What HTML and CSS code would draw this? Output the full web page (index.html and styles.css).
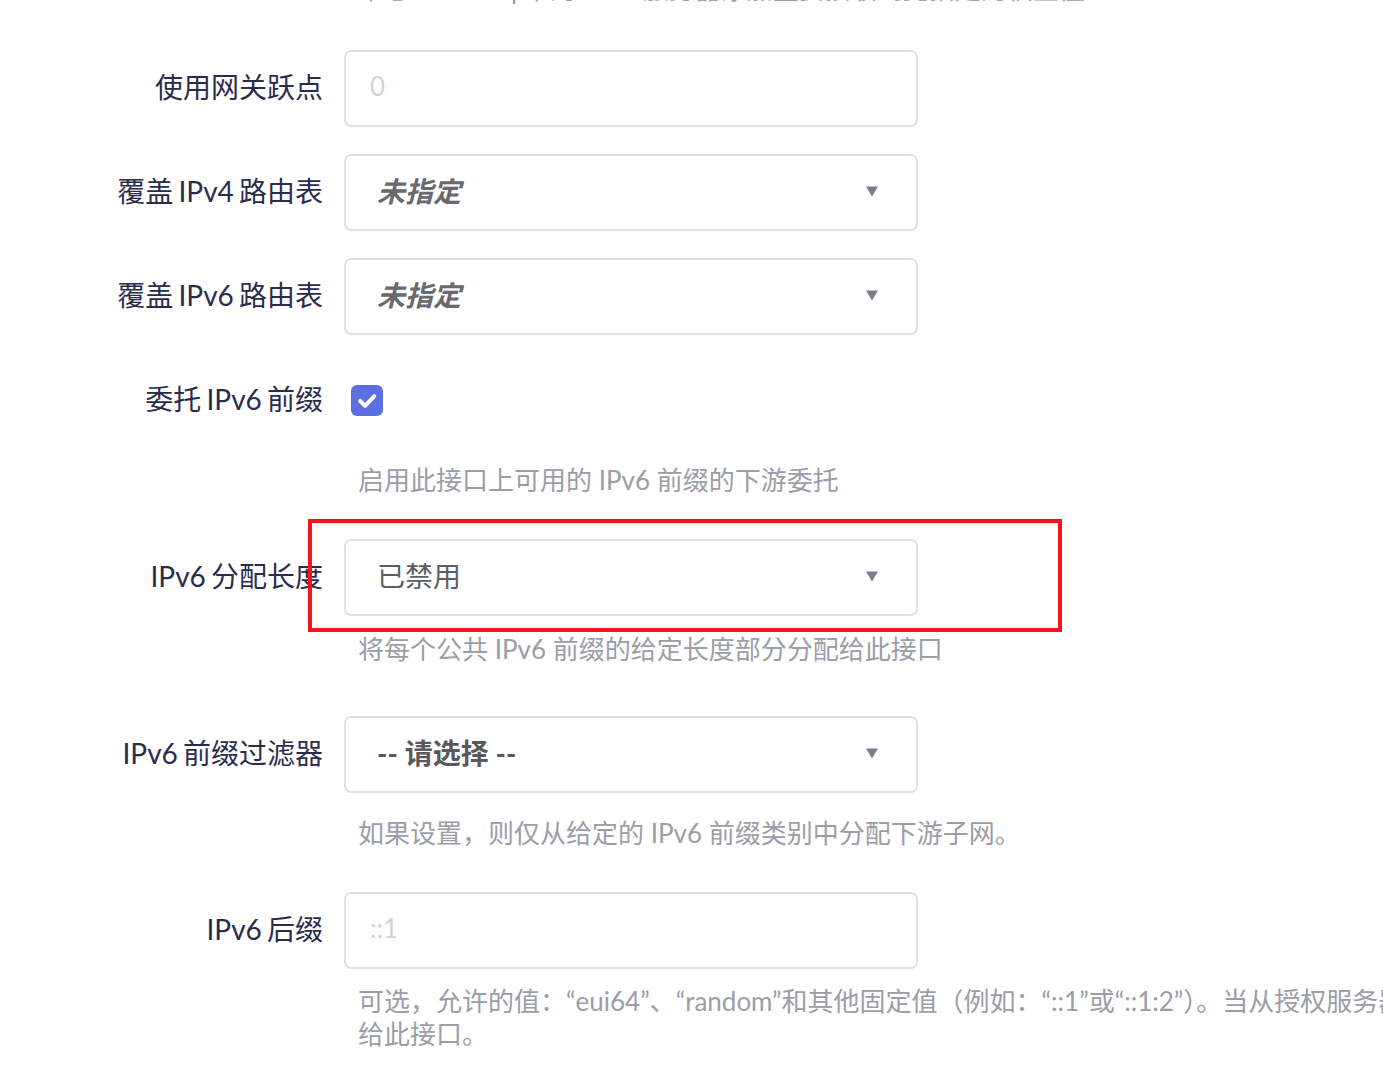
FILE: index.html
```html
<!DOCTYPE html>
<html lang="zh-CN">
<head>
<meta charset="utf-8">
<title>接口设置</title>
<link rel="stylesheet" href="styles.css">
</head>
<body>
<div class="page">
  <p class="desc desc-top">中心 dnsmasq 中的 DNS 服务器添加主要接收到此指定的权重值</p>

  <div class="row row-first">
    <label class="label">使用网关跃点</label>
    <div class="input"><span class="placeholder">0</span></div>
  </div>

  <div class="row">
    <label class="label">覆盖 IPv4 路由表</label>
    <div class="select"><span class="select-text unset">未指定</span><svg class="arrow" viewBox="0 0 12 10"><path d="M0 0H12L6 10Z"/></svg></div>
  </div>

  <div class="row">
    <label class="label">覆盖 IPv6 路由表</label>
    <div class="select"><span class="select-text unset">未指定</span><svg class="arrow" viewBox="0 0 12 10"><path d="M0 0H12L6 10Z"/></svg></div>
  </div>

  <div class="row">
    <label class="label">委托 IPv6 前缀</label>
    <div class="check-wrap">
      <span class="checkbox"><svg viewBox="0 0 32 32"><path d="M9 16.5l5 5 9.5-10" fill="none" stroke="#fff" stroke-width="4.2" stroke-linecap="round" stroke-linejoin="round"/></svg></span>
    </div>
    <p class="desc desc-check">启用此接口上可用的 IPv6 前缀的下游委托</p>
  </div>

  <div class="row row-gap-a">
    <label class="label">IPv6 分配长度</label>
    <div class="select"><span class="select-text">已禁用</span><svg class="arrow" viewBox="0 0 12 10"><path d="M0 0H12L6 10Z"/></svg></div>
    <p class="desc desc-sel">将每个公共 IPv6 前缀的给定长度部分分配给此接口</p>
  </div>

  <div class="row row-gap-b">
    <label class="label">IPv6 前缀过滤器</label>
    <div class="select"><span class="select-text strong">-- 请选择 --</span><svg class="arrow" viewBox="0 0 12 10"><path d="M0 0H12L6 10Z"/></svg></div>
    <p class="desc desc-filter">如果设置，则仅从给定的 IPv6 前缀类别中分配下游子网。</p>
  </div>

  <div class="row row-gap-a">
    <label class="label">IPv6 后缀</label>
    <div class="input"><span class="placeholder">::1</span></div>
    <p class="desc desc-wide">可选，允许的值：“eui64”、“random”和其他固定值（例如：“::1”或“::1:2”）。当从授权服务器获取 IPv6 前缀时，使用后缀（如“::1”）形成 IPv6 地址（“2001:db8::1”）并分配<br>给此接口。</p>
  </div>

  <div class="highlight"></div>
</div>
</body>
</html>
```

FILE: styles.css
```css
html, body {
  margin: 0;
  padding: 0;
  background: #ffffff;
  overflow: hidden;
}

body {
  font-family: Lato, "Noto Sans CJK SC", sans-serif;
}

.page {
  position: relative;
  width: 1383px;
  height: 1079px;
  overflow: hidden;
}

.desc {
  margin: 0;
  font-size: 26px;
  line-height: 33px;
  color: #9b9da7;
  white-space: nowrap;
}

.desc-top {
  margin-top: -27px;
  padding-left: 358px;
}

.row {
  display: grid;
  grid-template-columns: 323px 574px;
  column-gap: 21px;
  margin-top: 27px;
}

.row-first {
  margin-top: 44px;
}

.row-gap-a {
  margin-top: 42px;
}

.row-gap-b {
  margin-top: 50px;
}

.label {
  grid-column: 1;
  grid-row: 1;
  align-self: center;
  text-align: right;
  font-size: 28px;
  line-height: 36px;
  padding-bottom: 4px;
  color: #2b2c4d;
  white-space: nowrap;
  word-spacing: -2px;
}

.input,
.select,
.check-wrap {
  grid-column: 2;
  grid-row: 1;
  height: 77px;
  box-sizing: border-box;
}

.input,
.select {
  border: 2px solid #e1e1e4;
  border-radius: 7px;
  background: #fff;
  display: flex;
  align-items: center;
}

.input {
  padding-left: 24px;
}

.placeholder {
  font-size: 26px;
  color: #d2d2d6;
  padding-bottom: 6px;
}

.select {
  padding: 0 38px 0 31px;
  justify-content: space-between;
}

.select-text {
  font-size: 28px;
  color: #5e5e62;
  padding-bottom: 6px;
}

.select-text.unset {
  font-style: italic;
  font-weight: 700;
  color: #6a6a6e;
}

.select-text.strong {
  font-weight: 700;
  color: #59595d;
}

.arrow {
  width: 12px;
  height: 11px;
  fill: #777f8d;
  padding-bottom: 2px;
}

.check-wrap {
  display: flex;
  align-items: center;
  padding-left: 7px;
}

.checkbox {
  width: 32px;
  height: 31px;
  border-radius: 6px;
  background: #5b6fe1;
  display: flex;
}

.checkbox svg {
  width: 32px;
  height: 31px;
}

.row .desc {
  grid-column: 2;
  grid-row: 2;
  padding-left: 14px;
}

.desc-check {
  margin-top: 25px;
}

.desc-sel {
  margin-top: 17px;
}

.desc-filter {
  margin-top: 24px;
}

.desc-wide {
  margin-top: 16px;
}

.highlight {
  position: absolute;
  left: 308px;
  top: 519px;
  width: 746px;
  height: 105px;
  border: 4px solid #f5141a;
}
```
